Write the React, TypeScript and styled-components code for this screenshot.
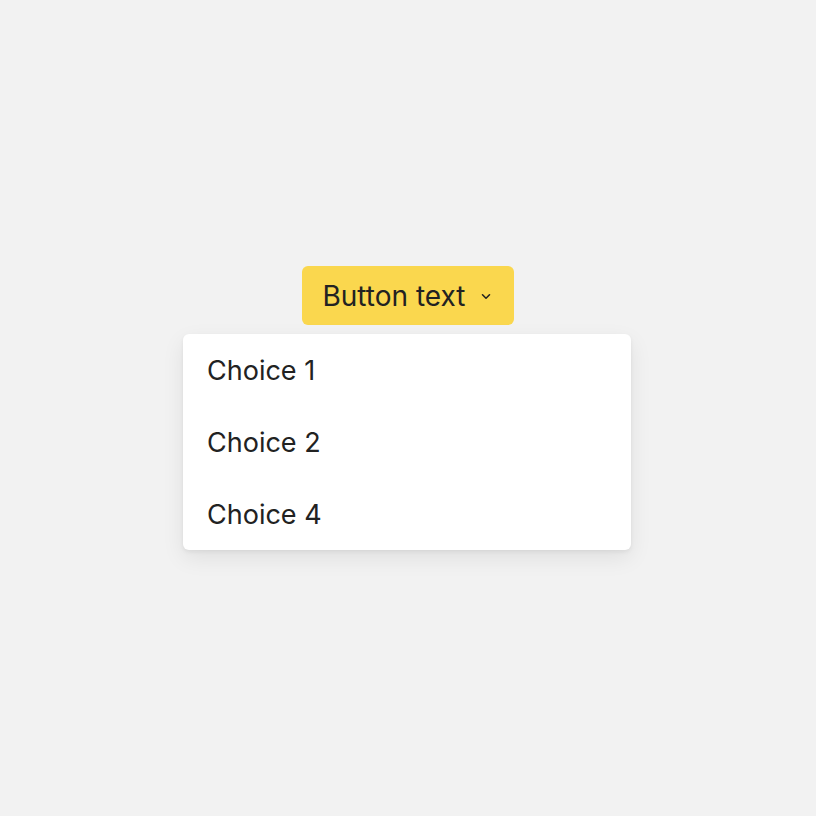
import React from 'react';
import styled, { createGlobalStyle } from 'styled-components';

const GlobalStyle = createGlobalStyle`
  html, body {
    margin: 0;
    padding: 0;
    background-color: #f2f2f2;
    font-family: Inter, "Noto Sans", sans-serif;
  }
`;

const Page = styled.div`
  width: 100%;
  height: 100vh;
  display: flex;
  align-items: center;
  justify-content: center;
`;

const Stack = styled.div`
  display: flex;
  flex-direction: column;
  align-items: center;
  gap: 9px;
  margin-top: -1px;
`;

const TriggerButton = styled.button`
  display: flex;
  align-items: center;
  gap: 15px;
  height: 59px;
  padding: 2px 23px 0 20px;
  border: none;
  border-radius: 6px;
  background-color: #fad74e;
  color: #222222;
  font-family: Inter, sans-serif;
  font-size: 28px;
  cursor: pointer;
`;

const Menu = styled.ul`
  width: 448px;
  margin: 0 2px 0 0;
  padding: 0;
  list-style: none;
  background-color: #ffffff;
  border-radius: 6px;
  box-shadow: 0 8px 22px rgba(0, 0, 0, 0.08), 0 2px 4px rgba(0, 0, 0, 0.06);
`;

const MenuItem = styled.li`
  height: 72px;
  box-sizing: border-box;
  display: flex;
  align-items: center;
  padding: 2px 24px 0;
  color: #222222;
  font-size: 27px;
  cursor: pointer;
`;

const Chevron = () => (
  <svg width="10" height="7" viewBox="0 0 10 7" fill="none">
    <path d="M1.5 1.8L5 5.2L8.5 1.8" stroke="#222" strokeWidth="1.6" strokeLinecap="round" strokeLinejoin="round" />
  </svg>
);

const choices = ['Choice 1', 'Choice 2', 'Choice 4'];

const App = () => (
  <>
    <GlobalStyle />
    <Page>
      <Stack>
        <TriggerButton>
          Button text
          <Chevron />
        </TriggerButton>
        <Menu>
          {choices.map((c) => (
            <MenuItem key={c}>{c}</MenuItem>
          ))}
        </Menu>
      </Stack>
    </Page>
  </>
);

export default App;
